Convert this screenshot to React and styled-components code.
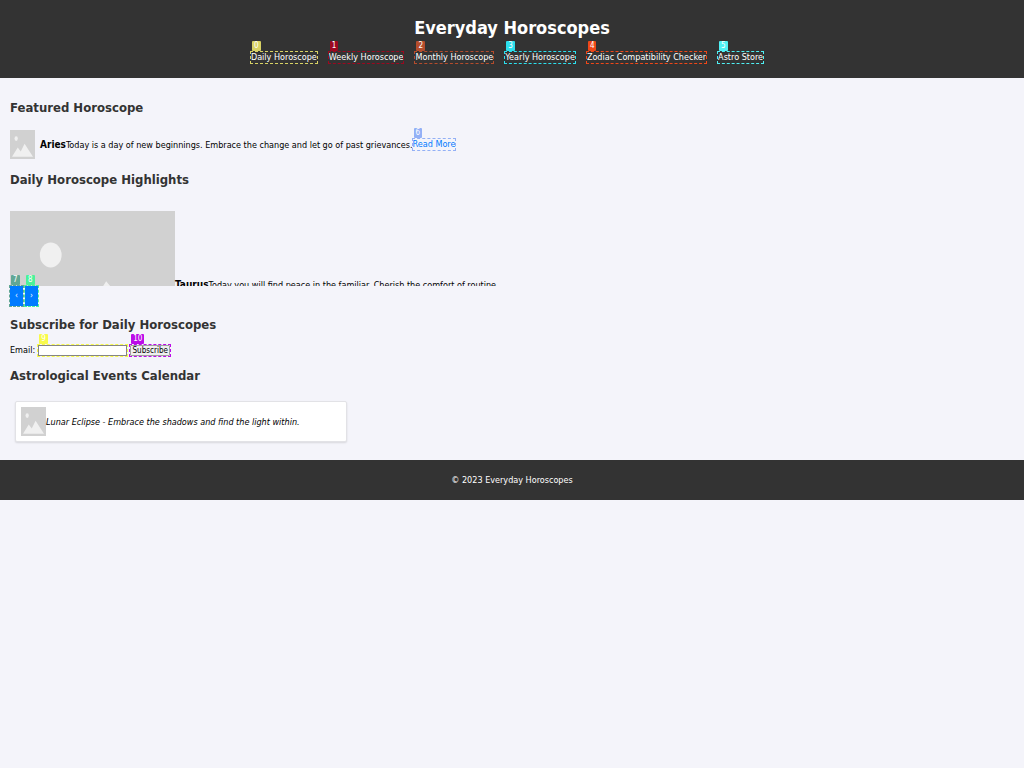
import React from "react";
import styled, { createGlobalStyle } from "styled-components";

const Global = createGlobalStyle`
  * { box-sizing: border-box; }
  body {
    margin: 0;
    background: #f4f4fa;
    color: #000;
    font-family: "DejaVu Sans Condensed", "DejaVu Sans", sans-serif;
    font-size: 9px;
    line-height: 14px;
  }
`;

const Header = styled.header`
  display: flex;
  flex-direction: column;
  align-items: center;
  gap: 12px;
  padding: 16px 10px 15px;
  background: #333;
  color: #fff;
`;

const Title = styled.h1`
  margin: 0;
  font-size: 18px;
  line-height: 24px;
`;

const Nav = styled.nav`
  display: flex;
  flex-wrap: wrap;
  justify-content: center;
  gap: 12px;
  padding-right: 10px;
`;

const Marked = styled.span`
  position: relative;
  display: inline-flex;
  outline: 1px dashed ${(p) => p.$color};
`;

const Badge = styled.span`
  position: absolute;
  left: 1px;
  bottom: 100%;
  min-width: 8px;
  margin-bottom: 1px;
  padding: 0 2px;
  border-radius: 1px;
  background: ${(p) => p.$color};
  color: #fff;
  font-size: 8px;
  line-height: 10px;
  text-align: center;
`;

const Link = styled.a`
  color: ${(p) => p.$color || "#fff"};
  line-height: 11px;
  text-decoration: none;
  white-space: nowrap;
`;

const Main = styled.main`
  padding: 20px 10px 18px;
`;

const Heading = styled.h2`
  margin: 0;
  color: #333;
  font-size: 13px;
  line-height: 20px;
`;

const Section = styled.section`
  margin-bottom: ${(p) => p.$after || 0}px;
`;

const Featured = styled.article`
  display: flex;
  align-items: center;
  margin-top: 12px;
`;

const Sign = styled.h3`
  margin: 0 0 0 ${(p) => p.$indent || 0}px;
  font-size: 10px;
  line-height: 14px;
`;

const Text = styled.p`
  margin: 0;
`;

const Picture = styled.svg`
  display: block;
  flex: none;
  width: ${(p) => (p.$large ? 165 : 25)}px;
  height: ${(p) => (p.$large ? 148 : 29)}px;
`;

const Carousel = styled.div`
  height: 75px;
  margin-top: 21px;
  overflow: hidden;
`;

const Slide = styled.div`
  display: flex;
  align-items: center;
`;

const Controls = styled.div`
  display: flex;
  gap: 2px;
`;

const Arrow = styled.button`
  width: 13px;
  height: 20px;
  padding: 0;
  border: 0;
  background: #007bff;
  color: #fff;
  font: inherit;
  font-size: 8px;
`;

const Form = styled.form`
  display: flex;
  align-items: center;
  gap: 3px;
  margin-top: 8px;
`;

const Email = styled.input`
  width: 89px;
  height: 11px;
  padding: 0 2px;
  border: 1px solid #858585;
  background: #fff;
  font: inherit;
`;

const Submit = styled.button`
  width: 40px;
  height: 11px;
  padding: 0;
  border: 1px solid #a0a0a0;
  border-radius: 1px;
  background: #efefef;
  color: #000;
  font: inherit;
  font-size: 8px;
  line-height: 9px;
`;

const Event = styled.article`
  display: flex;
  align-items: center;
  width: calc(33% + 1px);
  margin: 15px 0 0 5px;
  padding: 5px;
  border: 1px solid #e2e2e6;
  border-radius: 2px;
  background: #fff;
  box-shadow: 0 1px 2px rgba(0, 0, 0, 0.12);
`;

const Footer = styled.footer`
  padding: 13px;
  background: #333;
  color: #fff;
  text-align: center;
`;

function Placeholder({ large }) {
  return (
    <Picture $large={large} viewBox="0 0 100 100" preserveAspectRatio="none" role="img" aria-label="Placeholder">
      <rect width="100" height="100" fill="#d1d1d1" />
      <ellipse cx="24.7" cy="29.7" rx="6.6" ry="8.4" fill="#f0f0f0" />
      <path d="M8 92 31 60 43 74 58.3 47.5 92 92Z" fill="#f0f0f0" />
    </Picture>
  );
}

function Mark({ id, color, children }) {
  return (
    <Marked $color={color}>
      {children}
      <Badge $color={color}>{id}</Badge>
    </Marked>
  );
}

const links = [
  ["Daily Horoscope", "#d8d264"],
  ["Weekly Horoscope", "#9c0820"],
  ["Monthly Horoscope", "#b54c2c"],
  ["Yearly Horoscope", "#2be0ee"],
  ["Zodiac Compatibility Checker", "#f04718"],
  ["Astro Store", "#4ff0f4"],
];

export default function App() {
  return (
    <>
      <Global />
      <Header>
        <Title>Everyday Horoscopes</Title>
        <Nav>
          {links.map(([label, color], i) => (
            <Mark key={label} id={i} color={color}>
              <Link href="#">{label}</Link>
            </Mark>
          ))}
        </Nav>
      </Header>
      <Main>
        <Section $after={11}>
          <Heading>Featured Horoscope</Heading>
          <Featured>
            <Placeholder />
            <Sign $indent={5}>Aries</Sign>
            <Text>Today is a day of new beginnings. Embrace the change and let go of past grievances.</Text>
            <Mark id={6} color="#93b0f6">
              <Link href="#" $color="#007bff">Read More</Link>
            </Mark>
          </Featured>
        </Section>
        <Section $after={9}>
          <Heading>Daily Horoscope Highlights</Heading>
          <Carousel>
            <Slide>
              <Placeholder large />
              <Sign>Taurus</Sign>
              <Text>Today you will find peace in the familiar. Cherish the comfort of routine.</Text>
            </Slide>
          </Carousel>
          <Controls>
            <Mark id={7} color="#62a794">
              <Arrow aria-label="Previous">‹</Arrow>
            </Mark>
            <Mark id={8} color="#4af29a">
              <Arrow aria-label="Next">›</Arrow>
            </Mark>
          </Controls>
        </Section>
        <Section $after={9}>
          <Heading>Subscribe for Daily Horoscopes</Heading>
          <Form onSubmit={(e) => e.preventDefault()}>
            <label htmlFor="email">Email:</label>
            <Mark id={9} color="#f8fa4c">
              <Email id="email" type="email" />
            </Mark>
            <Mark id={10} color="#bb0be8">
              <Submit type="submit">Subscribe</Submit>
            </Mark>
          </Form>
        </Section>
        <Section>
          <Heading>Astrological Events Calendar</Heading>
          <Event>
            <Placeholder />
            <em>Lunar Eclipse - Embrace the shadows and find the light within.</em>
          </Event>
        </Section>
      </Main>
      <Footer>© 2023 Everyday Horoscopes</Footer>
    </>
  );
}
